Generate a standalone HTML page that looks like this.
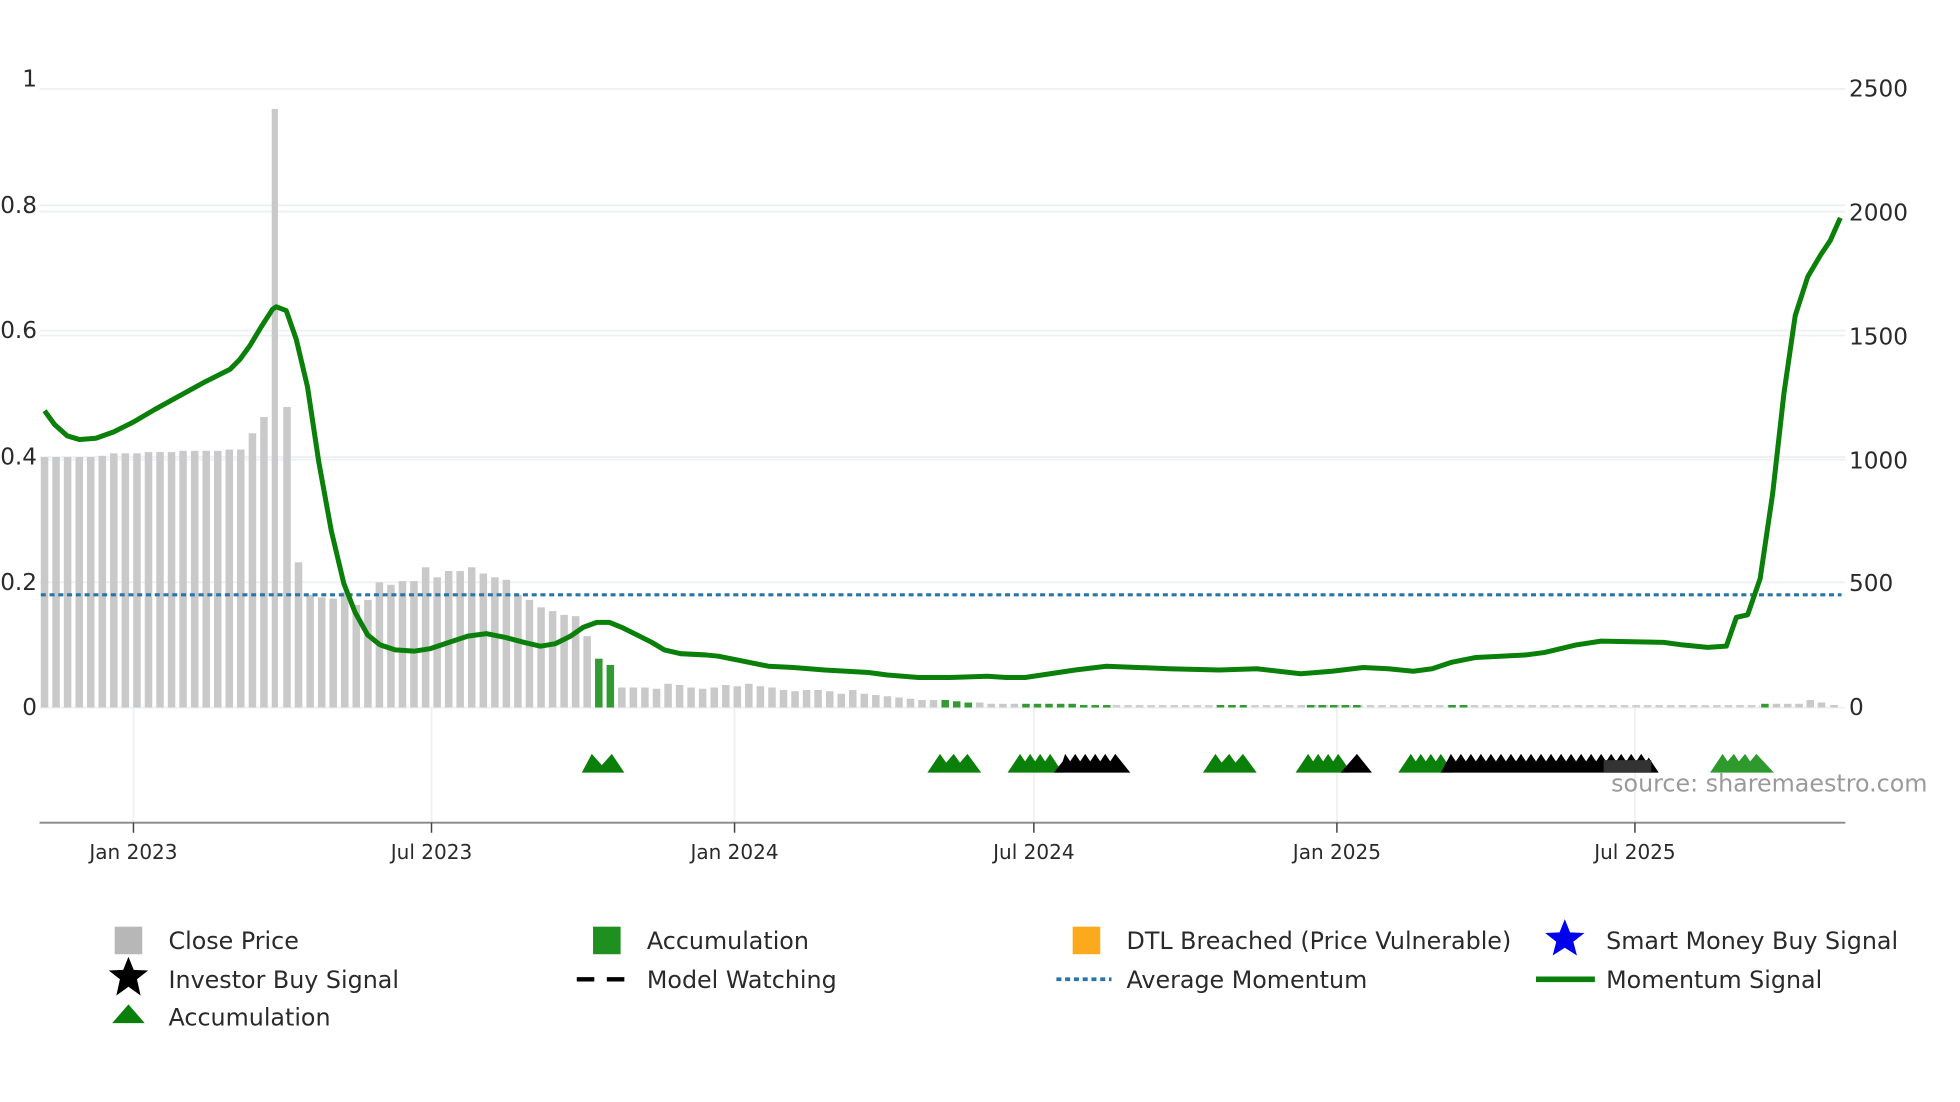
<!DOCTYPE html>
<html><head><meta charset="utf-8"><style>
html,body{margin:0;padding:0;background:#fff;width:1960px;height:1102px;overflow:hidden}
svg{display:block}
text{font-family:"DejaVu Sans","Liberation Sans",sans-serif;fill:#2a2a2a}
</style></head><body>
<svg width="1960" height="1102" viewBox="1.5 1 1565 880" xmlns="http://www.w3.org/2000/svg">
<!-- gridlines -->
<g stroke="#eef0f4" stroke-width="1.5">
<line x1="33" y1="72" x2="1475" y2="72"/>
<line x1="33" y1="165" x2="1475" y2="165"/><line x1="33" y1="170" x2="1475" y2="170"/>
<line x1="33" y1="265" x2="1475" y2="265"/><line x1="33" y1="269" x2="1475" y2="269"/>
<line x1="33" y1="366" x2="1475" y2="366"/><line x1="33" y1="368" x2="1475" y2="368"/>
<line x1="33" y1="466" x2="1475" y2="466"/>
<line x1="33" y1="566" x2="1475" y2="566"/>
<line x1="108" y1="566" x2="108" y2="658"/><line x1="346" y1="566" x2="346" y2="658"/>
<line x1="588" y1="566" x2="588" y2="658"/><line x1="827" y1="566" x2="827" y2="658"/>
<line x1="1069" y1="566" x2="1069" y2="658"/><line x1="1307" y1="566" x2="1307" y2="658"/>
</g>
<!-- axis labels -->
<g font-size="18.5" text-anchor="end">
<text x="31" y="70">1</text><text x="31" y="171">0.8</text><text x="31" y="271">0.6</text>
<text x="31" y="372">0.4</text><text x="31" y="472">0.2</text><text x="31" y="572">0</text>
</g>
<g font-size="18.5">
<text x="1478" y="78">2500</text><text x="1478" y="177">2000</text><text x="1478" y="276">1500</text>
<text x="1478" y="375">1000</text><text x="1478" y="473">500</text><text x="1478" y="572">0</text>
</g>
<!-- bars -->
<g fill="#c9c9c9">
<rect x="34" y="366" width="6" height="200"/><rect x="43.2" y="366" width="6" height="200"/><rect x="52.4" y="366" width="6" height="200"/><rect x="61.7" y="366" width="6" height="200"/><rect x="70.9" y="366" width="6" height="200"/><rect x="80.1" y="365" width="6" height="201"/><rect x="89.3" y="363" width="6" height="203"/><rect x="98.5" y="363" width="6" height="203"/><rect x="107.8" y="363" width="6" height="203"/><rect x="117" y="362" width="6" height="204"/><rect x="126.2" y="362" width="6" height="204"/><rect x="135.4" y="362" width="6" height="204"/><rect x="144.6" y="361" width="6" height="205"/><rect x="153.9" y="361" width="6" height="205"/><rect x="163.1" y="361" width="6" height="205"/><rect x="172.3" y="361" width="6" height="205"/><rect x="181.5" y="360" width="6" height="206"/><rect x="190.7" y="360" width="6" height="206"/><rect x="200" y="347" width="6" height="219"/><rect x="209.2" y="334" width="6" height="232"/><rect x="218.4" y="88" width="5" height="478"/><rect x="227.6" y="326" width="6" height="240"/><rect x="236.8" y="450" width="6" height="116"/><rect x="246.1" y="476" width="6" height="90"/><rect x="255.3" y="478" width="6" height="88"/><rect x="264.5" y="479" width="6" height="87"/><rect x="273.7" y="474" width="6" height="92"/><rect x="282.9" y="484" width="6" height="82"/><rect x="292.2" y="480" width="6" height="86"/><rect x="301.4" y="466" width="6" height="100"/><rect x="310.6" y="468" width="6" height="98"/><rect x="319.8" y="465" width="6" height="101"/><rect x="329" y="465" width="6" height="101"/><rect x="338.3" y="454" width="6" height="112"/><rect x="347.5" y="462" width="6" height="104"/><rect x="356.7" y="457" width="6" height="109"/><rect x="365.9" y="457" width="6" height="109"/><rect x="375.1" y="454" width="6" height="112"/><rect x="384.4" y="459" width="6" height="107"/><rect x="393.6" y="462" width="6" height="104"/><rect x="402.8" y="464" width="6" height="102"/><rect x="412" y="476" width="6" height="90"/><rect x="421.2" y="480" width="6" height="86"/><rect x="430.5" y="486" width="6" height="80"/><rect x="439.7" y="489" width="6" height="77"/><rect x="448.9" y="492" width="6" height="74"/><rect x="458.1" y="493" width="6" height="73"/><rect x="467.3" y="509" width="6" height="57"/>
<rect x="495" y="550" width="6" height="16"/><rect x="504.2" y="550" width="6" height="16"/><rect x="513.4" y="550" width="6" height="16"/><rect x="522.7" y="551" width="6" height="15"/><rect x="531.9" y="547" width="6" height="19"/><rect x="541.1" y="548" width="6" height="18"/><rect x="550.3" y="550" width="6" height="16"/><rect x="559.5" y="551" width="6" height="15"/><rect x="568.8" y="550" width="6" height="16"/><rect x="578" y="548" width="6" height="18"/><rect x="587.2" y="549" width="6" height="17"/><rect x="596.4" y="547" width="6" height="19"/><rect x="605.6" y="549" width="6" height="17"/><rect x="614.9" y="550" width="6" height="16"/><rect x="624.1" y="552" width="6" height="14"/><rect x="633.3" y="553" width="6" height="13"/><rect x="642.5" y="552" width="6" height="14"/><rect x="651.7" y="552" width="6" height="14"/><rect x="661" y="553" width="6" height="13"/><rect x="670.2" y="555" width="6" height="11"/><rect x="679.4" y="552" width="6" height="14"/><rect x="688.6" y="555" width="6" height="11"/><rect x="697.8" y="556" width="6" height="10"/><rect x="707.1" y="557" width="6" height="9"/><rect x="716.3" y="558" width="6" height="8"/><rect x="725.5" y="559" width="6" height="7"/><rect x="734.7" y="560" width="6" height="6"/><rect x="743.9" y="560" width="6" height="6"/><rect x="780.8" y="562" width="6" height="4"/><rect x="790" y="563" width="6" height="3"/><rect x="799.3" y="563" width="6" height="3"/><rect x="808.5" y="563" width="6" height="3"/>
<rect x="1417" y="563" width="6" height="3"/><rect x="1426" y="563" width="6" height="3"/><rect x="1435" y="563" width="6" height="3"/><rect x="1444" y="560" width="6" height="6"/><rect x="1453" y="562" width="6" height="4"/><rect x="1463" y="564" width="6" height="2"/>
</g>
<line x1="890" y1="565" x2="1407" y2="565" stroke="#cfcfcf" stroke-width="2" stroke-dasharray="6 3.22"/>
<g fill="#339933">
<rect x="476.6" y="527" width="6" height="39"/><rect x="485.8" y="532" width="6" height="34"/>
<rect x="753.2" y="560" width="6" height="6"/><rect x="762.4" y="561" width="6" height="5"/><rect x="771.6" y="562" width="6" height="4"/>
<rect x="817.7" y="563" width="6" height="3"/><rect x="826.9" y="563" width="6" height="3"/><rect x="836.1" y="563" width="6" height="3"/><rect x="845.4" y="563" width="6" height="3"/><rect x="854.6" y="563" width="6" height="3"/><rect x="863.8" y="564" width="6" height="2"/><rect x="873" y="564" width="6" height="2"/><rect x="882.2" y="564" width="6" height="2"/>
<rect x="1407.8" y="563" width="6" height="3"/>
</g>
<g stroke="#339933" stroke-width="2" stroke-dasharray="6 3.22">
<line x1="973" y1="565" x2="997" y2="565"/><line x1="1045" y1="565" x2="1088" y2="565"/><line x1="1158" y1="565" x2="1175" y2="565"/>
</g>
<!-- average momentum -->
<line x1="34" y1="476" x2="1472" y2="476" stroke="#2b74a8" stroke-width="2.5" stroke-dasharray="4 3"/>
<!-- momentum -->
<polyline fill="none" stroke="#0a800a" stroke-width="4" stroke-linejoin="round" points="37,329 45,340 55,349 65,352 78,351 92,346 108,338 125,328 145,317 165,306 185,296 193,288 201,277 210,262 219,248 222,246 230,249 238,272 247,310 256,370 266,425 276,467 285,490 295,508 305,516 317,520 332,521 345,519 360,514 375,509 390,507 405,510 420,514 433,517 445,515 457,509 467,502 478,498 488,498 498,502 510,508 522,514 532,520 545,523 565,524 575,525 595,529 615,533 635,534 660,536 695,538 710,540 735,542 760,542 790,541 805,542 820,542 840,539 860,536 885,533 910,534 935,535 975,536 1005,535 1040,539 1065,537 1090,534 1110,535 1130,537 1145,535 1160,530 1180,526 1220,524 1235,522 1260,516 1280,513 1330,514 1345,516 1365,518 1380,517 1388,494 1397,492 1407,463 1417,395 1426,315 1435,253 1445,222 1455,205 1463,193 1471,175"/>
<!-- triangles -->
<g fill="#0a800a">
<path d="M466,618 L474,603 L482,612 L490,603 L500,618 Z"/>
<path d="M742,618 L752,603 L757,610 L763,603 L768,610 L774,603 L785,618 Z"/>
<path d="M806,618 L816,603 L820,609 L824,603 L828,609 L832,603 L836,609 L840,603 L844,609 L850,618 Z"/>
<path d="M962,618 L972,603 L977,610 L983,603 L988,610 L994,603 L1005,618 Z"/>
<path d="M1036,618 L1046,603 L1050,609 L1054,603 L1058,609 L1062,603 L1066,609 L1070,603 L1075,610 L1080,618 Z"/>
<path d="M1118,618 L1128,603 L1132,609 L1136,603 L1140,609 L1144,603 L1148,609 L1152,603 L1156,609 L1162,618 Z"/>
</g>
<path fill="#2e9a2e" d="M1367,618 L1377,603 L1381,609 L1386,603 L1390,609 L1395,603 L1399,609 L1404,603 L1418,618 Z"/>
<g fill="#000">
<path d="M843,618 L850,609 L852,603 L856,609 L860,603 L864,609 L868,603 L872,609 L876,603 L880,609 L884,603 L888,609 L892,603 L904,618 Z"/>
<path d="M1072,618 L1085,603 L1097,618 Z"/>
<path d="M1152,618 L1160,603 L1164,609 L1168,603 L1172,609 L1176,603 L1180,609 L1184,603 L1188,609 L1192,603 L1196,609 L1200,603 L1204,609 L1208,603 L1212,609 L1216,603 L1220,609 L1224,603 L1228,609 L1232,603 L1236,609 L1240,603 L1244,609 L1248,603 L1252,609 L1256,603 L1260,609 L1264,603 L1268,609 L1272,603 L1276,609 L1280,603 L1284,609 L1288,603 L1292,609 L1296,603 L1300,609 L1304,603 L1308,609 L1312,603 L1316,609 L1318,606 L1326,618 Z"/>
</g>
<rect x="1282" y="608" width="38" height="10" fill="#333"/>
<text x="1288" y="633" font-size="19" style="fill:#9a9a9a">source: sharemaestro.com</text>
<!-- x axis -->
<line x1="33" y1="658" x2="1475" y2="658" stroke="#888" stroke-width="1.5"/>
<g stroke="#444" stroke-width="1.2">
<line x1="108" y1="658" x2="108" y2="666"/><line x1="346" y1="658" x2="346" y2="666"/><line x1="588" y1="658" x2="588" y2="666"/>
<line x1="827" y1="658" x2="827" y2="666"/><line x1="1069" y1="658" x2="1069" y2="666"/><line x1="1307" y1="658" x2="1307" y2="666"/>
</g>
<g font-size="16" text-anchor="middle">
<text x="108" y="687">Jan 2023</text><text x="346" y="687">Jul 2023</text><text x="588" y="687">Jan 2024</text>
<text x="827" y="687">Jul 2024</text><text x="1069" y="687">Jan 2025</text><text x="1307" y="687">Jul 2025</text>
</g>
<!-- legend -->
<rect x="93" y="741" width="22" height="22" fill="#b7b7b7"/>
<rect x="475" y="741" width="22" height="22" fill="#1f8f1f"/>
<rect x="858" y="741" width="22" height="22" fill="#fbaa1d"/>
<path fill="#0000ee" d="M1251,735 L1255.2,745.5 L1266.7,746 L1257.8,753 L1260.7,764 L1251,757.8 L1241.3,764 L1244.2,753 L1235.3,746 L1246.8,745.5 Z"/>
<path fill="#000" d="M104,765 L108.2,775.5 L119.7,776 L110.8,783 L113.7,796 L104,789 L94.3,796 L97.2,783 L88.3,776 L99.8,775.5 Z"/>
<line x1="462" y1="783" x2="506" y2="783" stroke="#000" stroke-width="3.5" stroke-dasharray="14 10"/>
<line x1="845" y1="783" x2="889" y2="783" stroke="#2b74a8" stroke-width="3" stroke-dasharray="4 3"/>
<line x1="1228" y1="783" x2="1275" y2="783" stroke="#0a800a" stroke-width="4.5"/>
<path fill="#0a800a" d="M91,818 L104,803 L117,818 Z"/>
<g font-size="19">
<text x="136" y="759">Close Price</text><text x="518" y="759">Accumulation</text><text x="901" y="759">DTL Breached (Price Vulnerable)</text><text x="1284" y="759">Smart Money Buy Signal</text>
<text x="136" y="790">Investor Buy Signal</text><text x="518" y="790">Model Watching</text><text x="901" y="790">Average Momentum</text><text x="1284" y="790">Momentum Signal</text>
<text x="136" y="820">Accumulation</text>
</g>
</svg>
</body></html>
